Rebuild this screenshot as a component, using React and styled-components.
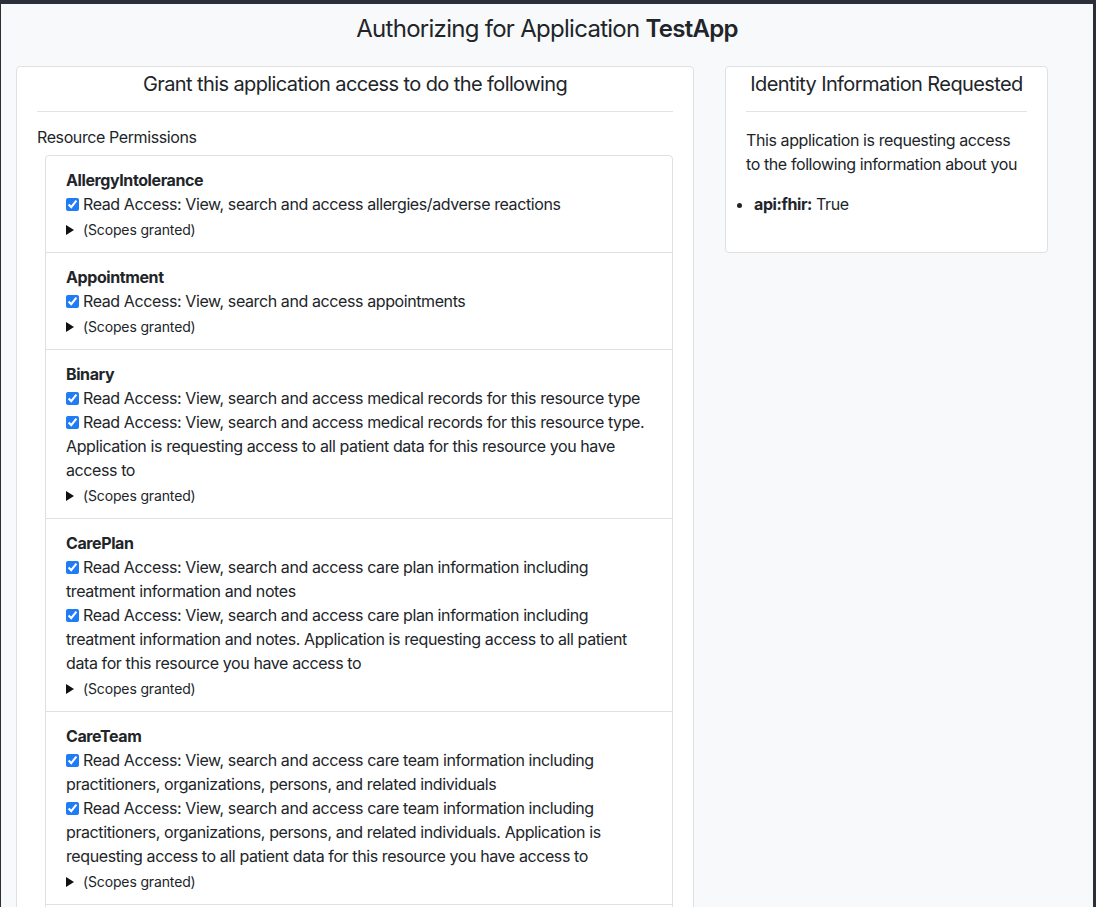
import React from "react";
import styled, { createGlobalStyle } from "styled-components";

const Global = createGlobalStyle`
  html, body { margin: 0; padding: 0; }
  body {
    background: #2b2f37;
    font-family: Inter, "Noto Sans", "Liberation Sans", sans-serif;
    color: #212529;
    font-size: 16px;
    line-height: 24px;
    letter-spacing: -0.025em;
  }
  * { box-sizing: border-box; }
`;

const Frame = styled.div`
  margin: 4px 3px 0 1px;
  background: #f8f9fa;
  min-height: 903px;
`;

const Title = styled.h1`
  margin: 0;
  padding-top: 11px;
  height: 62px;
  text-align: center;
  font-size: 24px;
  line-height: 28px;
  font-weight: 400;
  letter-spacing: -0.03em;
  b { font-weight: 600; }
`;

const Columns = styled.div`
  display: grid;
  grid-template-columns: 678px 323px;
  column-gap: 31px;
  padding-left: 15px;
  align-items: start;
`;

const Card = styled.section`
  background: #fff;
  border: 1px solid #dfe0e1;
  border-radius: 4px;
  padding: 2px 20px 20px;
`;

const CardTitle = styled.h2`
  margin: 0;
  text-align: center;
  font-size: 20px;
  line-height: 30px;
  font-weight: 400;
  letter-spacing: -0.03em;
  white-space: nowrap;
`;

const Rule = styled.hr`
  border: 0;
  border-top: 1px solid #e3e3e3;
  margin: 12px 0 13px;
`;

const Label = styled.div`
  margin-bottom: 6px;
`;

const ListGroup = styled.div`
  margin-left: 8px;
  border: 1px solid #dfe0e1;
  border-radius: 4px;
`;

const Item = styled.div`
  padding: 12px 20px 12px;
  & + & { border-top: 1px solid #dfe0e1; }
`;

const ItemName = styled.div`
  font-weight: 700;
`;

const Check = styled.input.attrs({ type: "checkbox", defaultChecked: true })`
  width: 13px;
  height: 13px;
  margin: 0 4px 0 0;
  accent-color: #1f7cf5;
  vertical-align: -1px;
`;

const Perm = styled.div``;

const Scopes = styled.details`
  font-size: 14px;
  line-height: 21px;
  letter-spacing: -0.01em;
  padding-top: 3px;
  summary {
    cursor: pointer;
    list-style: none;
    display: flex;
    align-items: center;
    gap: 9px;
  }
  summary::-webkit-details-marker { display: none; }
  summary::before {
    content: "";
    width: 0;
    height: 0;
    border-style: solid;
    border-width: 5px 0 5px 8px;
    border-color: transparent transparent transparent #111;
  }
`;

const Paragraph = styled.p`
  margin: 16px 0 16px;
`;

const Bullets = styled.ul`
  margin: 0 0 16px;
  padding-left: 8px;
  b { font-weight: 700; }
`;

const resources = [
  {
    name: "AllergyIntolerance",
    perms: ["Read Access: View, search and access allergies/adverse reactions"],
  },
  {
    name: "Appointment",
    perms: ["Read Access: View, search and access appointments"],
  },
  {
    name: "Binary",
    perms: [
      "Read Access: View, search and access medical records for this resource type",
      "Read Access: View, search and access medical records for this resource type. Application is requesting access to all patient data for this resource you have access to",
    ],
  },
  {
    name: "CarePlan",
    perms: [
      "Read Access: View, search and access care plan information including treatment information and notes",
      "Read Access: View, search and access care plan information including treatment information and notes. Application is requesting access to all patient data for this resource you have access to",
    ],
  },
  {
    name: "CareTeam",
    perms: [
      "Read Access: View, search and access care team information including practitioners, organizations, persons, and related individuals",
      "Read Access: View, search and access care team information including practitioners, organizations, persons, and related individuals. Application is requesting access to all patient data for this resource you have access to",
    ],
  },
  {
    name: "Condition",
    perms: [
      "Read Access: View, search and access conditions, problems and diagnoses",
      "Read Access: View, search and access conditions, problems and diagnoses. Application is requesting access to all patient data for this resource you have access to",
    ],
  },
];

export default function App() {
  return (
    <>
      <Global />
      <Frame>
        <Title>
          Authorizing for Application <b>TestApp</b>
        </Title>
        <Columns>
          <Card>
            <CardTitle>Grant this application access to do the following</CardTitle>
            <Rule />
            <Label>Resource Permissions</Label>
            <ListGroup>
              {resources.map((r) => (
                <Item key={r.name}>
                  <ItemName>{r.name}</ItemName>
                  {r.perms.map((p, i) => (
                    <Perm key={i}>
                      <Check />
                      {p}
                    </Perm>
                  ))}
                  <Scopes>
                    <summary>(Scopes granted)</summary>
                  </Scopes>
                </Item>
              ))}
            </ListGroup>
          </Card>
          <Card>
            <CardTitle>Identity Information Requested</CardTitle>
            <Rule />
            <Paragraph>
              This application is requesting access to the following information about you
            </Paragraph>
            <Bullets>
              <li>
                <b>api:fhir:</b> True
              </li>
            </Bullets>
          </Card>
        </Columns>
      </Frame>
    </>
  );
}
